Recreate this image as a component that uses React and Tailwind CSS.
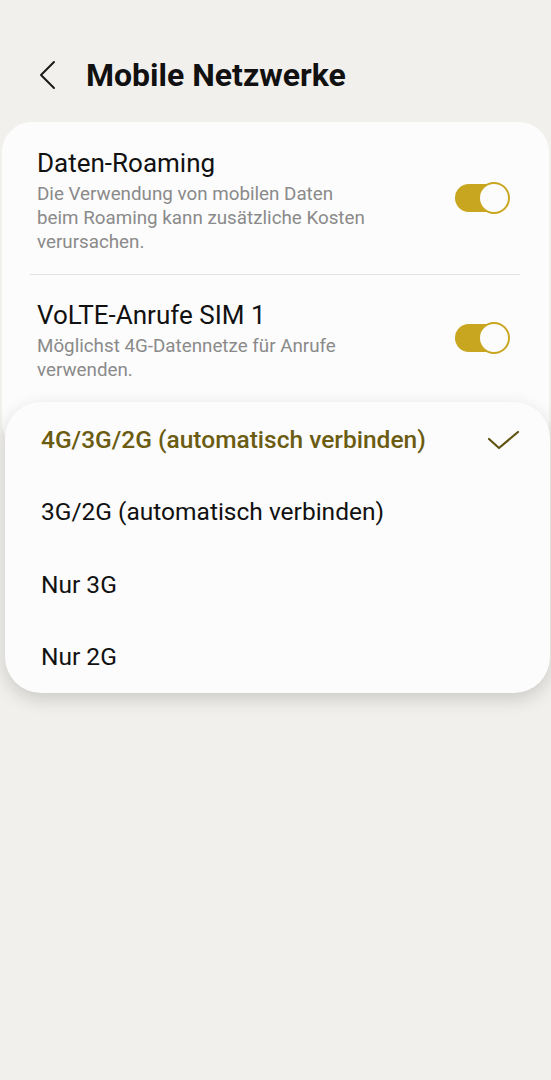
import React from 'react';

const Toggle = () => (
  <div className="relative w-[55px] h-[32px] shrink-0 -mt-[5px]">
    <div className="absolute left-0 top-[2px] w-[50px] h-[28px] rounded-full bg-[#c9a61f]" />
    <div className="absolute right-0 top-0 w-[32px] h-[32px] rounded-full bg-[#fcfcfc] border-2 border-[#c9a61f]" />
  </div>
);

const SettingRow = ({ title, desc, pt }) => (
  <div className={`flex items-center justify-between pl-[35px] pr-[39px] ${pt}`}>
    <div className="flex flex-col">
      <div className="text-[26px] leading-[32px] text-[#111]">{title}</div>
      <div className="mt-[3px] text-[18.8px] leading-[24px] text-[#8a8a8a] w-[338px]">{desc}</div>
    </div>
    <Toggle />
  </div>
);

const options = [
  '4G/3G/2G (automatisch verbinden)',
  '3G/2G (automatisch verbinden)',
  'Nur 3G',
  'Nur 2G',
];

export default function App() {
  return (
    <div className="relative w-[551px] h-[1080px] bg-[#f1f0ed] overflow-hidden" style={{ fontFamily: 'Roboto, "Noto Sans", sans-serif' }}>
      <div className="flex items-center h-[40px] mt-[55px] pl-[38px]">
        <svg width="20" height="30" viewBox="0 0 20 30" fill="none" stroke="#1a1a1a" strokeWidth="2" strokeLinecap="round" strokeLinejoin="round">
          <path d="M16 2 L3 15 L16 28" />
        </svg>
        <h1 className="ml-[28px] text-[32px] leading-[40px] font-bold text-[#111]">Mobile Netzwerke</h1>
      </div>

      <div className="mt-[27px] mx-[2px] bg-[#fcfcfc] rounded-[30px] h-[330px]">
        <SettingRow
          pt="pt-[25px]"
          title="Daten-Roaming"
          desc="Die Verwendung von mobilen Daten beim Roaming kann zusätzliche Kosten verursachen."
        />
        <div className="mt-[20px] ml-[28px] mr-[29px] h-px bg-[#e3e2e0]" />
        <SettingRow
          pt="pt-[24px]"
          title="VoLTE-Anrufe SIM 1"
          desc="Möglichst 4G-Datennetze für Anrufe verwenden."
        />
      </div>

      <div className="absolute left-[5px] top-[402px] w-[545px] h-[291px] bg-[#fcfcfc] rounded-[36px] shadow-[0_6px_18px_rgba(0,0,0,0.16)] pt-[2px]">
        {options.map((o, i) => (
          <div key={o} className="flex items-center justify-between h-[72.25px] pl-[36px] pr-[30px]">
            <span className={`text-[24.5px] leading-[30px] ${i === 0 ? 'text-[#6b5c12] font-medium' : 'text-[#111]'}`}>{o}</span>
            {i === 0 && (
              <svg width="32" height="20" viewBox="0 0 32 20" fill="none" stroke="#5f5312" strokeWidth="2.2" strokeLinecap="round" strokeLinejoin="round">
                <path d="M1 9 L11 18 L30 2" />
              </svg>
            )}
          </div>
        ))}
      </div>
    </div>
  );
}
